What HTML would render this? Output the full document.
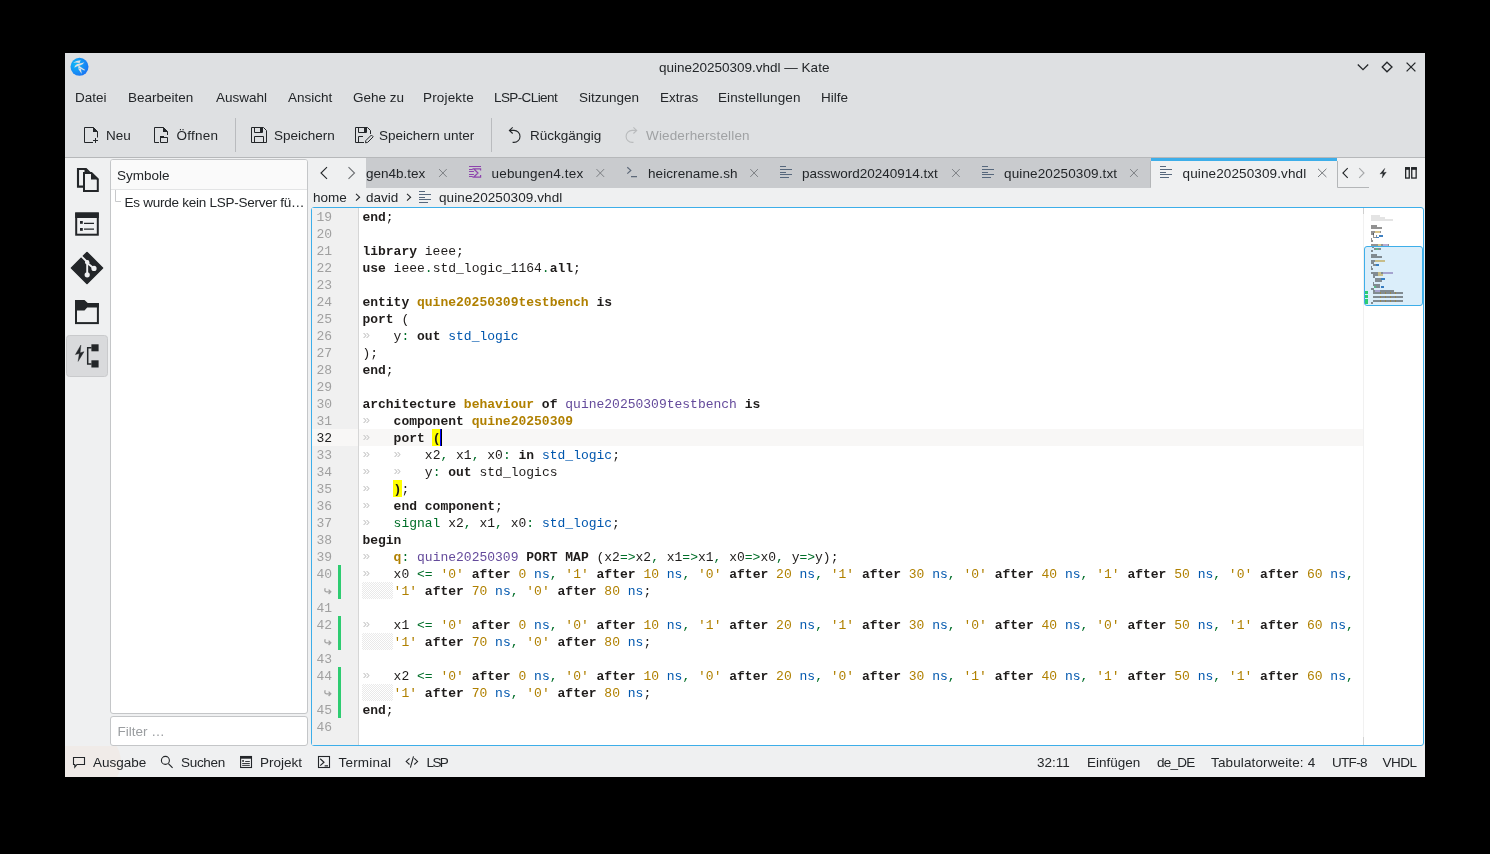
<!DOCTYPE html>
<html><head><meta charset="utf-8">
<style>
*{margin:0;padding:0;box-sizing:border-box}
html,body{width:1490px;height:854px;background:#000;overflow:hidden}
body{position:relative;font-family:"Liberation Sans",sans-serif;font-size:13.5px;color:#232629}
.a{position:absolute}
.t{position:absolute;line-height:15px;white-space:nowrap}
#win{left:65px;top:53px;width:1360px;height:724px;background:#eff0f1}
#hdr{left:65px;top:53px;width:1360px;height:104px;background:#dee0e2}
.ic{position:absolute;overflow:visible}

.cl{position:absolute;left:362.4px;height:17px;line-height:17px;white-space:pre;font-family:"Liberation Mono",monospace;font-size:13px;color:#1f1c1b;padding-top:1px}
.cl b{font-weight:bold}
.g{color:#006e28}.bl{color:#0057ae}.o{color:#b08000}.ob{color:#b08000;font-weight:bold}.pu{color:#644a9b}
.ym{font-weight:bold}
.tm{color:#cbcbcb;position:relative;top:-1px}
.ln{position:absolute;left:311px;width:21px;text-align:right;height:17px;line-height:17px;font-family:"Liberation Mono",monospace;font-size:13px;color:#a0a0a0;padding-top:1px;white-space:nowrap;direction:rtl}
.ln.cur{color:#1e1e1e}
.ln.wr{font-size:12px}
.hatch{position:absolute;left:362px;width:31px;height:17px;background-image:repeating-conic-gradient(#e9e9e9 0 25%,#fff 0 50%);background-size:2px 2px}

</style></head><body><div id="root" style="position:absolute;left:0;top:0;width:1490px;height:854px;will-change:transform">
<div id="win" class="a"></div>
<div id="hdr" class="a"></div>
<!-- header bottom border -->
<div class="a" style="left:65px;top:157px;width:1360px;height:1px;background:#b6b8ba"></div>

<!-- title bar -->
<div class="t" style="left:659px;top:60px">quine20250309.vhdl — Kate</div>

<!-- menu -->
<div class="t" style="left:75px;top:90px">Datei</div>
<div class="t" style="left:128px;top:90px">Bearbeiten</div>
<div class="t" style="left:216px;top:90px">Auswahl</div>
<div class="t" style="left:288px;top:90px">Ansicht</div>
<div class="t" style="left:353px;top:90px">Gehe zu</div>
<div class="t" style="left:423px;top:90px;letter-spacing:0.17px">Projekte</div>
<div class="t" style="left:494px;top:90px;letter-spacing:-0.6px">LSP-CLient</div>
<div class="t" style="left:579px;top:90px">Sitzungen</div>
<div class="t" style="left:660px;top:90px">Extras</div>
<div class="t" style="left:718px;top:90px;letter-spacing:0.12px">Einstellungen</div>
<div class="t" style="left:821px;top:90px">Hilfe</div>

<!-- toolbar -->
<div class="t" style="left:106px;top:128px">Neu</div>
<div class="t" style="left:176.5px;top:128px;letter-spacing:0.25px">Öffnen</div>
<div class="a" style="left:235px;top:118px;width:1px;height:34px;background:#b9bbbe"></div>
<div class="t" style="left:274px;top:128px">Speichern</div>
<div class="t" style="left:379px;top:128px">Speichern unter</div>
<div class="a" style="left:491px;top:118px;width:1px;height:34px;background:#b9bbbe"></div>
<div class="t" style="left:530px;top:128px">Rückgängig</div>
<div class="t" style="left:646px;top:128px;color:#a0a2a4;letter-spacing:0.15px">Wiederherstellen</div>

<!-- symbols panel -->
<div class="a" style="left:110px;top:159px;width:198px;height:555px;background:#fff;border:1px solid #c4c6c8;border-radius:3px"></div>
<div class="a" style="left:111px;top:160px;width:196px;height:30px;background:#fafafa;border-bottom:1px solid #e3e4e5;border-radius:2px 2px 0 0"></div>
<div class="t" style="left:117px;top:168px">Symbole</div>
<div class="t" style="left:124.5px;top:195px;letter-spacing:-0.25px">Es wurde kein LSP-Server fü…</div>
<div class="a" style="left:110px;top:716px;width:198px;height:30px;background:#fff;border:1px solid #c4c6c8;border-radius:3px"></div>
<div class="t" style="left:117.5px;top:724px;color:#9a9da0">Filter …</div>

<!-- tab bar -->
<div class="a" style="left:366px;top:158px;width:785px;height:30px;background:#c9cbce"></div>
<div class="a" style="left:1151px;top:158px;width:186px;height:3px;background:#3daee9"></div>
<div class="t" style="left:366px;top:166px">gen4b.tex</div>
<div class="t" style="left:491.5px;top:166px;letter-spacing:0.2px">uebungen4.tex</div>
<div class="t" style="left:648px;top:166px;letter-spacing:0.08px">heicrename.sh</div>
<div class="t" style="left:802px;top:166px">password20240914.txt</div>
<div class="t" style="left:1004px;top:166px;letter-spacing:0.12px">quine20250309.txt</div>
<div class="t" style="left:1182.5px;top:166px;letter-spacing:0.12px">quine20250309.vhdl</div>
<div class="t" style="left:313px;top:190px">home</div>
<div class="t" style="left:366px;top:190px">david</div>
<div class="t" style="left:439px;top:190px;letter-spacing:0.1px">quine20250309.vhdl</div>


<!-- editor -->
<div class="a" style="left:311px;top:207px;width:1113px;height:539px;background:#fff;border:1px solid #3daee9;border-radius:3px"></div>
<div class="a" style="left:312px;top:208px;width:46px;height:537px;background:#f0f0f0"></div>
<div class="a" style="left:358px;top:208px;width:1px;height:537px;background:#d6d6d6"></div>
<div class="a" style="left:312px;top:429px;width:46px;height:17px;background:#f8f7f6"></div>
<div class="a" style="left:359px;top:429px;width:1004px;height:17px;background:#f8f7f6"></div>
<div class="a" style="left:1363px;top:208px;width:1px;height:537px;background:#f1f1f1"></div>
<div class="a" style="left:1363px;top:208px;width:1px;height:6px;background:#cfcfcf"></div>
<div class="a" style="left:1363px;top:737px;width:1px;height:8px;background:#d4d4d4"></div>
<div class="a" style="left:1371.20px;top:215.20px;width:8.60px;height:2.00px;background:#e4e4e4"></div><div class="a" style="left:1371.20px;top:217.20px;width:13.50px;height:2.00px;background:#e4e4e4"></div><div class="a" style="left:1371.20px;top:219.20px;width:21.70px;height:2.00px;background:#e4e4e4"></div><div class="a" style="left:1371.20px;top:225.00px;width:5.60px;height:1.90px;background:rgba(40,40,40,0.5)"></div><div class="a" style="left:1371.20px;top:227.00px;width:10.80px;height:1.90px;background:rgba(40,40,40,0.5)"></div><div class="a" style="left:1371.20px;top:231.00px;width:3.80px;height:1.90px;background:rgba(40,40,40,0.5)"></div><div class="a" style="left:1375.00px;top:231.00px;width:5.00px;height:1.90px;background:rgba(176,128,0,0.45)"></div><div class="a" style="left:1380.00px;top:231.00px;width:1.00px;height:1.90px;background:rgba(40,40,40,0.5)"></div><div class="a" style="left:1371.20px;top:233.00px;width:2.50px;height:1.90px;background:rgba(40,40,40,0.5)"></div><div class="a" style="left:1375.50px;top:235.20px;width:1.50px;height:1.50px;background:rgba(40,40,40,0.5)"></div><div class="a" style="left:1379.00px;top:235.20px;width:4.00px;height:1.50px;background:rgba(0,87,174,0.75)"></div><div class="a" style="left:1373.20px;top:236.70px;width:2.60px;height:1.20px;background:rgba(40,40,40,0.5)"></div><div class="a" style="left:1375.80px;top:236.70px;width:3.00px;height:1.00px;background:rgba(0,87,174,0.75)"></div><div class="a" style="left:1373.00px;top:233.00px;width:1.00px;height:4.00px;background:rgba(40,40,40,0.5)"></div><div class="a" style="left:1371.20px;top:238.20px;width:0.80px;height:1.80px;background:rgba(40,40,40,0.5)"></div><div class="a" style="left:1371.20px;top:240.00px;width:1.80px;height:1.80px;background:rgba(40,40,40,0.5)"></div><div class="a" style="left:1371.20px;top:244.00px;width:6.80px;height:2.00px;background:rgba(40,40,40,0.5)"></div><div class="a" style="left:1378.00px;top:244.00px;width:3.00px;height:2.00px;background:rgba(176,128,0,0.45)"></div><div class="a" style="left:1381.00px;top:244.00px;width:2.00px;height:2.00px;background:rgba(40,40,40,0.5)"></div><div class="a" style="left:1383.00px;top:244.00px;width:5.00px;height:2.00px;background:rgba(100,74,155,0.45)"></div><div class="a" style="left:1388.00px;top:244.00px;width:1.00px;height:2.00px;background:rgba(40,40,40,0.5)"></div><div class="a" style="left:1364px;top:246px;width:58.5px;height:60px;background:#dbeefa;border:1.5px solid #3daee9;border-radius:3px"></div><div class="a" style="left:1371.24px;top:249.70px;width:1.76px;height:2.00px;background:rgba(40,40,40,0.5)"></div><div class="a" style="left:1371.24px;top:253.70px;width:5.62px;height:2.00px;background:rgba(40,40,40,0.5)"></div><div class="a" style="left:1371.24px;top:255.70px;width:10.54px;height:2.00px;background:rgba(40,40,40,0.5)"></div><div class="a" style="left:1371.24px;top:259.70px;width:3.87px;height:2.00px;background:rgba(40,40,40,0.5)"></div><div class="a" style="left:1375.11px;top:259.70px;width:9.84px;height:2.00px;background:rgba(176,128,0,0.45)"></div><div class="a" style="left:1371.24px;top:261.70px;width:2.46px;height:2.00px;background:rgba(40,40,40,0.5)"></div><div class="a" style="left:1373.35px;top:263.70px;width:2.46px;height:2.00px;background:rgba(40,40,40,0.5)"></div><div class="a" style="left:1375.81px;top:263.70px;width:3.16px;height:2.00px;background:rgba(0,87,174,0.75)"></div><div class="a" style="left:1371.24px;top:265.70px;width:1.05px;height:2.00px;background:rgba(40,40,40,0.5)"></div><div class="a" style="left:1371.24px;top:267.70px;width:1.76px;height:2.00px;background:rgba(40,40,40,0.5)"></div><div class="a" style="left:1371.24px;top:271.70px;width:6.68px;height:2.00px;background:rgba(40,40,40,0.5)"></div><div class="a" style="left:1377.92px;top:271.70px;width:3.16px;height:2.00px;background:rgba(176,128,0,0.45)"></div><div class="a" style="left:1381.08px;top:271.70px;width:1.76px;height:2.00px;background:rgba(40,40,40,0.5)"></div><div class="a" style="left:1382.84px;top:271.70px;width:10.19px;height:2.00px;background:rgba(100,74,155,0.45)"></div><div class="a" style="left:1373.35px;top:273.70px;width:4.57px;height:2.00px;background:rgba(40,40,40,0.5)"></div><div class="a" style="left:1377.92px;top:273.70px;width:4.92px;height:2.00px;background:rgba(176,128,0,0.45)"></div><div class="a" style="left:1373.35px;top:275.70px;width:1.76px;height:2.00px;background:rgba(40,40,40,0.5)"></div><div class="a" style="left:1375.11px;top:277.70px;width:5.97px;height:2.00px;background:rgba(40,40,40,0.5)"></div><div class="a" style="left:1381.08px;top:277.70px;width:3.87px;height:2.00px;background:rgba(0,87,174,0.75)"></div><div class="a" style="left:1375.11px;top:279.70px;width:6.68px;height:2.00px;background:rgba(40,40,40,0.5)"></div><div class="a" style="left:1373.35px;top:281.70px;width:1.05px;height:2.00px;background:rgba(40,40,40,0.5)"></div><div class="a" style="left:1373.35px;top:283.70px;width:6.68px;height:2.00px;background:rgba(40,40,40,0.5)"></div><div class="a" style="left:1373.70px;top:285.70px;width:2.11px;height:2.00px;background:rgba(0,150,60,0.6)"></div><div class="a" style="left:1375.81px;top:285.70px;width:4.22px;height:2.00px;background:rgba(40,40,40,0.5)"></div><div class="a" style="left:1381.08px;top:285.70px;width:2.81px;height:2.00px;background:rgba(0,87,174,0.75)"></div><div class="a" style="left:1371.24px;top:287.70px;width:2.46px;height:2.00px;background:rgba(40,40,40,0.5)"></div><div class="a" style="left:1373.35px;top:289.70px;width:1.41px;height:2.00px;background:rgba(40,40,40,0.5)"></div><div class="a" style="left:1374.76px;top:289.70px;width:5.27px;height:2.00px;background:rgba(100,74,155,0.45)"></div><div class="a" style="left:1380.03px;top:289.70px;width:13.70px;height:2.00px;background:rgba(40,40,40,0.5)"></div><div class="a" style="left:1373.00px;top:291.70px;width:29.87px;height:2.00px;background:rgba(40,40,40,0.5)"></div><div class="a" style="left:1380.03px;top:291.70px;width:1.05px;height:2.00px;background:rgba(176,128,0,0.45)"></div><div class="a" style="left:1384.95px;top:291.70px;width:1.05px;height:2.00px;background:rgba(176,128,0,0.45)"></div><div class="a" style="left:1389.87px;top:291.70px;width:1.05px;height:2.00px;background:rgba(176,128,0,0.45)"></div><div class="a" style="left:1394.79px;top:291.70px;width:1.05px;height:2.00px;background:rgba(176,128,0,0.45)"></div><div class="a" style="left:1364.92px;top:291.20px;width:3.16px;height:2.50px;background:#2ecc71"></div><div class="a" style="left:1373.00px;top:295.70px;width:29.87px;height:2.00px;background:rgba(40,40,40,0.5)"></div><div class="a" style="left:1380.03px;top:295.70px;width:1.05px;height:2.00px;background:rgba(176,128,0,0.45)"></div><div class="a" style="left:1384.95px;top:295.70px;width:1.05px;height:2.00px;background:rgba(176,128,0,0.45)"></div><div class="a" style="left:1389.87px;top:295.70px;width:1.05px;height:2.00px;background:rgba(176,128,0,0.45)"></div><div class="a" style="left:1394.79px;top:295.70px;width:1.05px;height:2.00px;background:rgba(176,128,0,0.45)"></div><div class="a" style="left:1364.92px;top:295.20px;width:3.16px;height:2.50px;background:#2ecc71"></div><div class="a" style="left:1373.00px;top:299.70px;width:29.87px;height:2.00px;background:rgba(40,40,40,0.5)"></div><div class="a" style="left:1380.03px;top:299.70px;width:1.05px;height:2.00px;background:rgba(176,128,0,0.45)"></div><div class="a" style="left:1384.95px;top:299.70px;width:1.05px;height:2.00px;background:rgba(176,128,0,0.45)"></div><div class="a" style="left:1389.87px;top:299.70px;width:1.05px;height:2.00px;background:rgba(176,128,0,0.45)"></div><div class="a" style="left:1394.79px;top:299.70px;width:1.05px;height:2.00px;background:rgba(176,128,0,0.45)"></div><div class="a" style="left:1364.92px;top:299.20px;width:3.16px;height:4.50px;background:#2ecc71"></div><div class="a" style="left:1371.24px;top:301.70px;width:1.76px;height:2.00px;background:rgba(40,40,40,0.5)"></div><div class="a" style="left:1373.60px;top:248.40px;width:2.40px;height:1.60px;background:rgba(40,40,40,0.5)"></div><div class="a" style="left:1376.00px;top:248.40px;width:2.00px;height:1.60px;background:rgba(0,150,60,0.6)"></div><div class="a" style="left:1378.00px;top:248.40px;width:3.00px;height:1.60px;background:rgba(40,40,40,0.5)"></div><div class="a" style="left:1371.60px;top:246.60px;width:2.60px;height:1.30px;background:rgba(40,40,40,0.5)"></div>
<div class="ln" style="top:208px">19</div><div class="ln" style="top:225px">20</div><div class="ln" style="top:242px">21</div><div class="ln" style="top:259px">22</div><div class="ln" style="top:276px">23</div><div class="ln" style="top:293px">24</div><div class="ln" style="top:310px">25</div><div class="ln" style="top:327px">26</div><div class="ln" style="top:344px">27</div><div class="ln" style="top:361px">28</div><div class="ln" style="top:378px">29</div><div class="ln" style="top:395px">30</div><div class="ln" style="top:412px">31</div><div class="ln cur" style="top:429px">32</div><div class="ln" style="top:446px">33</div><div class="ln" style="top:463px">34</div><div class="ln" style="top:480px">35</div><div class="ln" style="top:497px">36</div><div class="ln" style="top:514px">37</div><div class="ln" style="top:531px">38</div><div class="ln" style="top:548px">39</div><div class="ln" style="top:565px">40</div><svg class="a" style="left:318px;top:582px" width="20" height="17" fill="none" stroke="#a3a3a3" stroke-width="1.3"><path d="M7.2,6.2 Q6,9.5 8.5,9.8 H12.6 M10.6,7.6 L12.8,9.8 L10.6,12"/></svg><div class="ln" style="top:599px">41</div><div class="ln" style="top:616px">42</div><svg class="a" style="left:318px;top:633px" width="20" height="17" fill="none" stroke="#a3a3a3" stroke-width="1.3"><path d="M7.2,6.2 Q6,9.5 8.5,9.8 H12.6 M10.6,7.6 L12.8,9.8 L10.6,12"/></svg><div class="ln" style="top:650px">43</div><div class="ln" style="top:667px">44</div><svg class="a" style="left:318px;top:684px" width="20" height="17" fill="none" stroke="#a3a3a3" stroke-width="1.3"><path d="M7.2,6.2 Q6,9.5 8.5,9.8 H12.6 M10.6,7.6 L12.8,9.8 L10.6,12"/></svg><div class="ln" style="top:701px">45</div><div class="ln" style="top:718px">46</div>
<div class="a" style="left:338px;top:565px;width:3px;height:34px;background:#2ecc71"></div>
<div class="a" style="left:338px;top:616px;width:3px;height:34px;background:#2ecc71"></div>
<div class="a" style="left:338px;top:667px;width:3px;height:51px;background:#2ecc71"></div>
<div class="a" style="left:432px;top:429px;width:8px;height:17px;background:#ffff00"></div>
<div class="a" style="left:393px;top:480px;width:8.5px;height:17px;background:#ffff00"></div>
<div class="a" style="left:440px;top:429px;width:1px;height:17px;background:#0000ff"></div>
<div class="cl" style="top:208px"><b>end</b>;</div><div class="cl" style="top:225px"></div><div class="cl" style="top:242px"><b>library</b> ieee;</div><div class="cl" style="top:259px"><b>use</b> ieee<span class="g">.</span>std_logic_1164<span class="g">.</span><b>all</b>;</div><div class="cl" style="top:276px"></div><div class="cl" style="top:293px"><b>entity</b> <span class="ob">quine20250309testbench</span> <b>is</b></div><div class="cl" style="top:310px"><b>port</b> (</div><div class="cl" style="top:327px"><span class="tm">»</span>   y<span class="g">:</span> <b>out</b> <span class="bl">std_logic</span></div><div class="cl" style="top:344px">);</div><div class="cl" style="top:361px"><b>end</b>;</div><div class="cl" style="top:378px"></div><div class="cl" style="top:395px"><b>architecture</b> <span class="ob">behaviour</span> <b>of</b> <span class="pu">quine20250309testbench</span> <b>is</b></div><div class="cl" style="top:412px"><span class="tm">»</span>   <b>component</b> <span class="ob">quine20250309</span></div><div class="cl" style="top:429px"><span class="tm">»</span>   <b>port</b> <span class="ym">(</span></div><div class="cl" style="top:446px"><span class="tm">»</span>   <span class="tm">»</span>   x2<span class="g">,</span> x1<span class="g">,</span> x0<span class="g">:</span> <b>in</b> <span class="bl">std_logic</span>;</div><div class="cl" style="top:463px"><span class="tm">»</span>   <span class="tm">»</span>   y<span class="g">:</span> <b>out</b> std_logics</div><div class="cl" style="top:480px"><span class="tm">»</span>   <span class="ym">)</span>;</div><div class="cl" style="top:497px"><span class="tm">»</span>   <b>end component</b>;</div><div class="cl" style="top:514px"><span class="tm">»</span>   <span class="g">signal</span> x2<span class="g">,</span> x1<span class="g">,</span> x0<span class="g">:</span> <span class="bl">std_logic</span>;</div><div class="cl" style="top:531px"><b>begin</b></div><div class="cl" style="top:548px"><span class="tm">»</span>   <span class="ob">q</span><span class="g">:</span> <span class="pu">quine20250309</span> <b>PORT MAP</b> (x2<span class="g">=&gt;</span>x2<span class="g">,</span> x1<span class="g">=&gt;</span>x1<span class="g">,</span> x0<span class="g">=&gt;</span>x0<span class="g">,</span> y<span class="g">=&gt;</span>y);</div><div class="cl" style="top:565px"><span class="tm">»</span>   x0 <span class="g">&lt;=</span> <span class="o">&#x27;0&#x27;</span> <b>after</b> <span class="o">0</span> <span class="bl">ns</span><span class="g">,</span> <span class="o">&#x27;1&#x27;</span> <b>after</b> <span class="o">10</span> <span class="bl">ns</span><span class="g">,</span> <span class="o">&#x27;0&#x27;</span> <b>after</b> <span class="o">20</span> <span class="bl">ns</span><span class="g">,</span> <span class="o">&#x27;1&#x27;</span> <b>after</b> <span class="o">30</span> <span class="bl">ns</span><span class="g">,</span> <span class="o">&#x27;0&#x27;</span> <b>after</b> <span class="o">40</span> <span class="bl">ns</span><span class="g">,</span> <span class="o">&#x27;1&#x27;</span> <b>after</b> <span class="o">50</span> <span class="bl">ns</span><span class="g">,</span> <span class="o">&#x27;0&#x27;</span> <b>after</b> <span class="o">60</span> <span class="bl">ns</span><span class="g">,</span></div><div class="cl" style="top:582px">    <span class="o">&#x27;1&#x27;</span> <b>after</b> <span class="o">70</span> <span class="bl">ns</span><span class="g">,</span> <span class="o">&#x27;0&#x27;</span> <b>after</b> <span class="o">80</span> <span class="bl">ns</span>;</div><div class="hatch" style="top:582px"></div><div class="cl" style="top:599px"></div><div class="cl" style="top:616px"><span class="tm">»</span>   x1 <span class="g">&lt;=</span> <span class="o">&#x27;0&#x27;</span> <b>after</b> <span class="o">0</span> <span class="bl">ns</span><span class="g">,</span> <span class="o">&#x27;0&#x27;</span> <b>after</b> <span class="o">10</span> <span class="bl">ns</span><span class="g">,</span> <span class="o">&#x27;1&#x27;</span> <b>after</b> <span class="o">20</span> <span class="bl">ns</span><span class="g">,</span> <span class="o">&#x27;1&#x27;</span> <b>after</b> <span class="o">30</span> <span class="bl">ns</span><span class="g">,</span> <span class="o">&#x27;0&#x27;</span> <b>after</b> <span class="o">40</span> <span class="bl">ns</span><span class="g">,</span> <span class="o">&#x27;0&#x27;</span> <b>after</b> <span class="o">50</span> <span class="bl">ns</span><span class="g">,</span> <span class="o">&#x27;1&#x27;</span> <b>after</b> <span class="o">60</span> <span class="bl">ns</span><span class="g">,</span></div><div class="cl" style="top:633px">    <span class="o">&#x27;1&#x27;</span> <b>after</b> <span class="o">70</span> <span class="bl">ns</span><span class="g">,</span> <span class="o">&#x27;0&#x27;</span> <b>after</b> <span class="o">80</span> <span class="bl">ns</span>;</div><div class="hatch" style="top:633px"></div><div class="cl" style="top:650px"></div><div class="cl" style="top:667px"><span class="tm">»</span>   x2 <span class="g">&lt;=</span> <span class="o">&#x27;0&#x27;</span> <b>after</b> <span class="o">0</span> <span class="bl">ns</span><span class="g">,</span> <span class="o">&#x27;0&#x27;</span> <b>after</b> <span class="o">10</span> <span class="bl">ns</span><span class="g">,</span> <span class="o">&#x27;0&#x27;</span> <b>after</b> <span class="o">20</span> <span class="bl">ns</span><span class="g">,</span> <span class="o">&#x27;0&#x27;</span> <b>after</b> <span class="o">30</span> <span class="bl">ns</span><span class="g">,</span> <span class="o">&#x27;1&#x27;</span> <b>after</b> <span class="o">40</span> <span class="bl">ns</span><span class="g">,</span> <span class="o">&#x27;1&#x27;</span> <b>after</b> <span class="o">50</span> <span class="bl">ns</span><span class="g">,</span> <span class="o">&#x27;1&#x27;</span> <b>after</b> <span class="o">60</span> <span class="bl">ns</span><span class="g">,</span></div><div class="cl" style="top:684px">    <span class="o">&#x27;1&#x27;</span> <b>after</b> <span class="o">70</span> <span class="bl">ns</span><span class="g">,</span> <span class="o">&#x27;0&#x27;</span> <b>after</b> <span class="o">80</span> <span class="bl">ns</span>;</div><div class="hatch" style="top:684px"></div><div class="cl" style="top:701px"><b>end</b>;</div><div class="cl" style="top:718px"></div>
<div class="a" style="left:441px;top:429px;width:1px;height:17px;background:#000"></div>


<!-- status bar -->
<div class="a" style="left:65px;top:746px;width:100px;height:31px;overflow:hidden"><div class="a" style="left:-6px;top:-15px;width:62px;height:62px;border-radius:50%;background:#f0ebe8"></div></div>
<div class="t" style="left:93px;top:755px">Ausgabe</div>
<div class="t" style="left:181px;top:755px;letter-spacing:-0.3px">Suchen</div>
<div class="t" style="left:260px;top:755px">Projekt</div>
<div class="t" style="left:338.5px;top:755px;letter-spacing:0.2px">Terminal</div>
<div class="t" style="left:426.5px;top:755px;letter-spacing:-1.6px">LSP</div>
<div class="t" style="left:1037px;top:755px">32:11</div>
<div class="t" style="left:1087px;top:755px">Einfügen</div>
<div class="t" style="left:1157px;top:755px;letter-spacing:-0.75px">de_DE</div>
<div class="t" style="left:1211px;top:755px;letter-spacing:0.13px">Tabulatorweite: 4</div>
<div class="t" style="left:1332px;top:755px;letter-spacing:-0.7px">UTF-8</div>
<div class="t" style="left:1382.5px;top:755px;letter-spacing:-0.5px">VHDL</div>
<svg class="a" style="left:0;top:0" width="1490" height="854" viewBox="0 0 1490 854" fill="none" stroke="#232629" stroke-width="1">
<!-- app icon -->
<defs>
<radialGradient id="kg" cx="0.3" cy="0.35" r="0.8"><stop offset="0" stop-color="#0fb9f8"/><stop offset="1" stop-color="#1c6ff2"/></radialGradient>
</defs>
<circle cx="79.5" cy="66.8" r="9" fill="url(#kg)" stroke="none"/>
<g fill="#dfe1e4" stroke="none">
<path d="M73.2,62.8 Q76.5,60.2 80.6,60.3 L79.6,63 Q76.5,62.2 73.2,62.8Z"/>
<path d="M74.4,67.8 Q74.6,64.4 79.5,63.6 Q82,63.1 84.4,62.2 Q83,64.6 80,65.4 Q76.2,66.2 74.4,67.8Z"/>
<path d="M78.6,65.4 L85.2,69.9 L84.2,70.4 L78.2,67.8Z"/>
<path d="M77.8,68.2 L81.8,73.9 L80.9,69.0Z"/>
</g>
<!-- window buttons -->
<path d="M1357.8,64.5 L1363,69.7 L1368.2,64.5" stroke-width="1.3"/>
<path d="M1387,62.2 L1392,67 L1387,71.8 L1382.2,67Z" stroke-width="1.3"/>
<path d="M1406.6,62.6 L1415.4,71.4 M1415.4,62.6 L1406.6,71.4" stroke-width="1.3"/>

<!-- toolbar: new -->
<path d="M84.5,142.5 V127.5 H93.5 L97.5,131.5 V137.5 M84.5,142.5 H93" />
<path d="M93,127 V132 H98Z" fill="#232629" stroke="none"/>
<path d="M93,140.5 H98 M95.5,138 V143"/>
<!-- open -->
<path d="M154.5,142.5 V127.5 H163.5 L167.5,131.5 V135 M154.5,142.5 H159" />
<path d="M163,127 V132 H168Z" fill="#232629" stroke="none"/>
<path d="M160.5,142.5 V136.5 H163 L164,137.5 H167.5 V142.5Z"/>
<rect x="160" y="136" width="4" height="2" fill="#232629" stroke="none"/>
<!-- save -->
<path d="M251.5,142.5 V127.5 H263.5 L266.5,130.5 V142.5Z"/>
<path d="M254.5,127.5 V132.5 H262.5 V127.5"/>
<rect x="260" y="128" width="2" height="4" fill="#232629" stroke="none"/>
<path d="M254.5,142.5 V136.5 H263.5 V142.5"/>
<!-- save as -->
<path d="M364,142.5 H355.5 V127.5 H367.5 L370.5,130.5 V134"/>
<path d="M358.5,127.5 V132.5 H366.5 V127.5"/>
<rect x="364" y="128" width="2" height="4" fill="#232629" stroke="none"/>
<path d="M358.5,142.5 V136.5 H363"/>
<path d="M365.5,142.8 L365.8,140.6 L371.4,135 L373.2,136.8 L367.6,142.4Z" stroke-width="1"/>
<!-- undo -->
<path d="M512.7,127.3 L509.4,130.4 L512.7,133.5 M509.6,130.4 H514 A6,6 0 0 1 514,142.4 H512.6" stroke-width="1.1"/>
<!-- redo -->
<path d="M633.4,127.3 L636.7,130.4 L633.4,133.5 M636.5,130.4 H632.1 A6,6 0 0 0 632.1,142.4 H633.5" stroke="#b9bbbd" stroke-width="1.1"/>

<!-- sidebar: documents -->
<path d="M84,186.6 H78 V169 H86 L90,173" stroke-width="2.1"/>
<path d="M84,191 V173 H91.5 L97.8,179.2 V191Z" stroke-width="2" fill="#eff0f1"/>
<path d="M91,172 V179.5 H98.5Z" fill="#232629" stroke="none"/>
<path d="M85.5,169 L87.2,170.6 V172 H84.5 V169Z" fill="#232629" stroke="none"/>
<!-- list -->
<rect x="76.2" y="213.5" width="21.6" height="21.2" stroke-width="2"/>
<rect x="75.2" y="212.5" width="23.6" height="5.5" fill="#232629" stroke="none"/>
<rect x="80" y="221" width="2.8" height="2.8" fill="#232629" stroke="none"/>
<rect x="80" y="228" width="2.8" height="2.8" fill="#232629" stroke="none"/>
<path d="M84,223.4 H94 M84,229.1 H94" stroke-width="1.2"/>
<!-- git -->
<path d="M87,252.5 L102.5,268 L87,283.5 L71.5,268Z" fill="#232629" stroke="#232629" stroke-width="1.6" stroke-linejoin="round"/>
<path d="M81,255.8 L87.2,262 V275 M87.6,263.2 L94,268.6" stroke="#eff0f1" stroke-width="1.9"/>
<circle cx="87.2" cy="262.3" r="2.2" fill="#eff0f1" stroke="none"/>
<circle cx="87.2" cy="274.8" r="2.6" fill="#eff0f1" stroke="none"/>
<circle cx="94" cy="268.4" r="2.6" fill="#eff0f1" stroke="none"/>
<!-- folder -->
<path d="M75,300 H84.5 L88,303.2 H98.9 V307.6 H87.2 L84.5,310.4 H75Z" fill="#232629" stroke="none"/>
<rect x="76" y="304" width="21.9" height="19.1" stroke-width="2"/>
<!-- active button -->
<rect x="66.5" y="335.5" width="41" height="41" rx="3" fill="#d9dadc" stroke="#c9cacc"/>
<path d="M80.9,345 L75.4,354.6 L79.3,353.5 L78.1,361.4 L84,351.7 L80.1,352.8Z" fill="#232629" stroke="#232629" stroke-width="0.4" stroke-linejoin="round"/>
<rect x="91.4" y="344.3" width="7.2" height="7" fill="#232629" stroke="none"/>
<rect x="91.4" y="360.3" width="7.2" height="7.2" fill="#232629" stroke="none"/>
<path d="M91.5,347.7 H87.7 V364 H91.5" stroke-width="1.5"/>

<!-- tab bar arrows -->
<path d="M327,167.2 L321,173 L327,178.8" stroke-width="1.1"/>
<path d="M348.5,167.2 L354.5,173 L348.5,178.8" stroke="#6b6e72" stroke-width="1.1"/>
<!-- close x's -->
<path d="M439.1,169.1 L446.7,176.9 M446.7,169.1 L439.1,176.9" stroke="#7c7f83"/>
<path d="M596.5,169.1 L604.1,176.9 M604.1,169.1 L596.5,176.9" stroke="#7c7f83"/>
<path d="M750.3,169.1 L757.9,176.9 M757.9,169.1 L750.3,176.9" stroke="#7c7f83"/>
<path d="M952.1,169.1 L959.7,176.9 M959.7,169.1 L952.1,176.9" stroke="#7c7f83"/>
<path d="M1130.1,169.1 L1137.7,176.9 M1137.7,169.1 L1130.1,176.9" stroke="#7c7f83"/>
<path d="M1318,168.8 L1326.4,177 M1326.4,168.8 L1318,177" stroke="#75787c"/>
<!-- sigma icon -->
<g stroke="#8e44ad" stroke-width="1.1">
<path d="M469,166.5 H481 M469,169.5 H472.8 M469,171.5 H473.9 M469,174.5 H473.9 M469,176.5 H472.8"/>
<path d="M480.6,170.6 V168.8 H473.6 L478,173 L473.6,177.2 H480.6 V175" stroke-width="1.2"/>
</g>
<!-- terminal tab icon -->
<path d="M627.3,167.2 L630.8,170.4 L627.3,173.6 M631,176.6 H637" stroke="#5d6878" stroke-width="1.2"/>
<!-- text list icons -->
<g stroke="#56677c" stroke-width="1.1">
<path d="M780,166.5 H786 M780,169.5 H792 M780,172.5 H786 M780,174.5 H792 M780,177.5 H789"/>
<path d="M982,166.5 H988 M982,169.5 H994 M982,172.5 H988 M982,174.5 H994 M982,177.5 H991"/>
<path d="M1160,166.5 H1166 M1160,169.5 H1172 M1160,172.5 H1166 M1160,174.5 H1172 M1160,177.5 H1169"/>
<path d="M419,191.5 H425 M419,194.5 H431 M419,197.5 H425 M419,199.5 H431 M419,202.5 H428"/>
</g>
<!-- right tab bar controls -->
<path d="M1337.5,161 V187.5 H1369" stroke="#b4b6b8"/>
<path d="M1150.5,161 V187.5" stroke="#b4b6b8"/>
<path d="M1347.7,168.2 L1342.9,173 L1347.7,177.8" stroke-width="1.1"/>
<path d="M1359.2,168.2 L1364,173 L1359.2,177.8" stroke="#a5a7a9" stroke-width="1.1"/>
<path d="M1384.8,168.3 L1379.9,174.1 L1382.9,173.4 L1382.1,178 L1386.3,172.1 L1383.3,172.8Z" fill="#232629" stroke="#232629" stroke-width="0.3" stroke-linejoin="round"/>
<rect x="1405.65" y="167.85" width="3.6" height="10.2" stroke-width="1.3"/>
<rect x="1411.75" y="167.85" width="4.4" height="10.2" stroke-width="1.3"/>
<rect x="1405" y="167.2" width="4.9" height="2.6" fill="#232629" stroke="none"/>
<rect x="1411.1" y="167.2" width="5.7" height="2.6" fill="#232629" stroke="none"/>
<!-- breadcrumb separators -->
<path d="M356,193.8 L359.6,197.2 L356,200.6" stroke-width="1.1"/>
<path d="M407,193.8 L410.6,197.2 L407,200.6" stroke-width="1.1"/>

<!-- symbols tree line -->
<path d="M115.5,190 V201.5 H121" stroke="#c8c9cb"/>

<!-- status bar icons -->
<path d="M73.5,757.5 H84.5 V764.5 H77 L74.8,767.2 V764.5 H73.5Z" stroke-width="1.1"/>
<circle cx="165.4" cy="760.4" r="4.0" stroke-width="1.1"/>
<path d="M168.4,763.6 L172.6,767.8" stroke-width="1.2"/>
<rect x="240.6" y="756.5" width="10.9" height="11" stroke-width="1.1"/>
<rect x="240.2" y="756.1" width="11.7" height="2.6" fill="#232629" stroke="none"/>
<rect x="242.2" y="760.1" width="1.7" height="1.7" fill="#232629" stroke="none"/>
<path d="M245.2,761.5 H249.8 M242.2,763.5 H249.8 M242.2,765.4 H249.8" stroke-width="0.9"/>
<rect x="318.5" y="756.5" width="11" height="11" stroke-width="1.1"/>
<path d="M320.2,758.8 L324,762.2 L320.2,765.6 M324.6,765.9 H328" stroke-width="1.15"/>
<path d="M409.5,758.3 L406.2,761.4 L409.5,764.5 M413.5,756.4 L410.4,767.6 M414.3,758.3 L417.6,761.4 L414.3,764.5" stroke-width="1.1"/>
</svg>

</div></body></html>
